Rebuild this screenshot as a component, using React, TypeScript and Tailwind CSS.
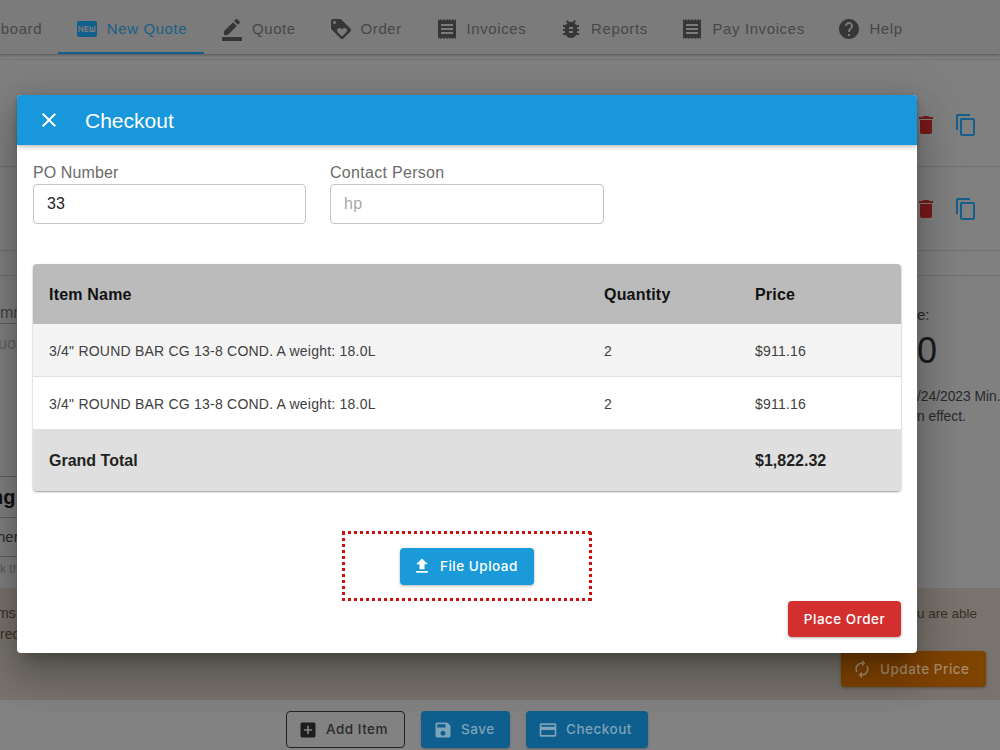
import React from "react";

const P = {
  fiberNew: "M20 4H4c-1.11 0-1.99.89-1.99 2L2 18c0 1.11.89 2 2 2h16c1.11 0 2-.89 2-2V6c0-1.11-.89-2-2-2zM8.5 15H7.3l-2.55-3.5V15H3.5V9h1.25l2.5 3.5V9H8.5v6zm5-4.74H11v1.12h2.5v1.26H11v1.11h2.5V15h-4V9h4v1.26zm7 3.74c0 .55-.45 1-1 1h-4c-.55 0-1-.45-1-1V9h1.25v4.51h1.13V9.99h1.25v3.51h1.12V9h1.25v5z",
  dash: "M3 13h8V3H3v10zm0 8h8v-6H3v6zm10 0h8V11h-8v10zm0-18v6h8V3h-8z",
  border: "M22 24H2v-4h20v4zM13.06 5.19l3.75 3.75L7.75 18H4v-3.75l9.06-9.06zm4.82 2.68-3.75-3.75 1.83-1.83c.39-.39 1.02-.39 1.41 0l2.34 2.34c.39.39.39 1.02 0 1.41l-1.83 1.83z",
  loyalty: "m21.41 11.58-9-9C12.05 2.22 11.55 2 11 2H4c-1.1 0-2 .9-2 2v7c0 .55.22 1.05.59 1.42l9 9c.36.36.86.58 1.41.58s1.05-.22 1.41-.59l7-7c.37-.36.59-.86.59-1.41s-.23-1.06-.59-1.42zM5.5 7C4.67 7 4 6.33 4 5.5S4.67 4 5.5 4 7 4.67 7 5.5 6.33 7 5.5 7zm11.77 8.27L13 19.54l-4.27-4.27C8.28 14.81 8 14.19 8 13.5c0-1.38 1.12-2.5 2.5-2.5.69 0 1.32.28 1.77.74l.73.72.73-.73c.45-.45 1.08-.73 1.77-.73 1.38 0 2.5 1.12 2.5 2.5 0 .69-.28 1.32-.73 1.77z",
  receipt: "M18 17H6v-2h12v2zm0-4H6v-2h12v2zm0-4H6V7h12v2zM3 22l1.5-1.5L6 22l1.5-1.5L9 22l1.5-1.5L12 22l1.5-1.5L15 22l1.5-1.5L18 22l1.5-1.5L21 22V2l-1.5 1.5L18 2l-1.5 1.5L15 2l-1.5 1.5L12 2l-1.5 1.5L9 2 7.5 3.5 6 2 4.5 3.5 3 2v20z",
  bug: "M20 8h-2.81c-.45-.78-1.07-1.45-1.82-1.96L17 4.41 15.59 3l-2.17 2.17C12.96 5.06 12.49 5 12 5c-.49 0-.96.06-1.41.17L8.41 3 7 4.41l1.62 1.63C7.88 6.55 7.26 7.22 6.81 8H4v2h2.09c-.05.33-.09.66-.09 1v1H4v2h2v1c0 .34.04.67.09 1H4v2h2.81c1.04 1.79 2.97 3 5.19 3s4.15-1.21 5.19-3H20v-2h-2.09c.05-.33.09-.66.09-1v-1h2v-2h-2v-1c0-.34-.04-.67-.09-1H20V8zm-6 8h-4v-2h4v2zm0-4h-4v-2h4v2z",
  help: "M12 2C6.48 2 2 6.48 2 12s4.48 10 10 10 10-4.48 10-10S17.52 2 12 2zm1 17h-2v-2h2v2zm2.07-7.75-.9.92C13.45 12.9 13 13.5 13 15h-2v-.5c0-1.1.45-2.1 1.17-2.83l1.24-1.26c.37-.36.59-.86.59-1.41 0-1.1-.9-2-2-2s-2 .9-2 2H8c0-2.21 1.79-4 4-4s4 1.79 4 4c0 .88-.36 1.68-.93 2.25z",
  del: "M6 19c0 1.1.9 2 2 2h8c1.1 0 2-.9 2-2V7H6v12zM19 4h-3.5l-1-1h-5l-1 1H5v2h14V4z",
  copy: "M16 1H4c-1.1 0-2 .9-2 2v14h2V3h12V1zm3 4H8c-1.1 0-2 .9-2 2v14c0 1.1.9 2 2 2h11c1.1 0 2-.9 2-2V7c0-1.1-.9-2-2-2zm0 16H8V7h11v14z",
  close: "M19 6.41 17.59 5 12 10.59 6.41 5 5 6.41 10.59 12 5 17.59 6.41 19 12 13.41 17.59 19 19 17.59 13.41 12z",
  upload: "M9 16h6v-6h4l-7-7-7 7h4zm-4 2h14v2H5z",
  renew: "M12 6v3l4-4-4-4v3c-4.42 0-8 3.58-8 8 0 1.57.46 3.03 1.24 4.26L6.7 14.8c-.45-.83-.7-1.79-.7-2.8 0-3.31 2.69-6 6-6zm6.76 1.74L17.3 9.2c.44.84.7 1.79.7 2.8 0 3.31-2.69 6-6 6v-3l-4 4 4 4v-3c4.42 0 8-3.58 8-8 0-1.57-.46-3.03-1.24-4.26z",
  add: "M19 3H5c-1.11 0-2 .9-2 2v14c0 1.1.89 2 2 2h14c1.1 0 2-.9 2-2V5c0-1.1-.9-2-2-2zm-2 10h-4v4h-2v-4H7v-2h4V7h2v4h4v2z",
  save: "M17 3H5c-1.11 0-2 .9-2 2v14c0 1.1.89 2 2 2h14c1.1 0 2-.9 2-2V7l-4-4zm-5 16c-1.66 0-3-1.34-3-3s1.34-3 3-3 3 1.34 3 3-1.34 3-3 3zm3-10H5V5h10v4z",
  card: "M20 4H4c-1.11 0-1.99.89-1.99 2L2 18c0 1.11.89 2 2 2h16c1.11 0 2-.89 2-2V6c0-1.11-.89-2-2-2zm0 14H4v-6h16v6zm0-10H4V6h16v2z",
};

function Icon({ d, className }: { d: string; className?: string }) {
  return (
    <svg viewBox="0 0 24 24" fill="currentColor" className={className}>
      <path d={d} />
    </svg>
  );
}

const tabs = [
  { label: "Dashboard", icon: P.dash },
  { label: "New Quote", icon: P.fiberNew, active: true },
  { label: "Quote", icon: P.border },
  { label: "Order", icon: P.loyalty },
  { label: "Invoices", icon: P.receipt },
  { label: "Reports", icon: P.bug },
  { label: "Pay Invoices", icon: P.receipt },
  { label: "Help", icon: P.help },
];

function RowActions({ className }: { className: string }) {
  return (
    <div className={className}>
      <Icon d={P.del} className="h-6 w-6 text-[#7a1a1c]" />
      <Icon d={P.copy} className="h-6 w-6 text-[#155f8a]" />
    </div>
  );
}

const rows = [
  { name: `3/4" ROUND BAR CG 13-8 COND. A weight: 18.0L`, qty: "2", price: "$911.16", bg: "bg-[#f4f4f4]" },
  { name: `3/4" ROUND BAR CG 13-8 COND. A weight: 18.0L`, qty: "2", price: "$911.16", bg: "bg-white" },
];

export default function App() {
  return (
    <div className="relative flex h-[750px] w-[1000px] flex-col overflow-hidden bg-[#808080] font-['Liberation_Sans',Arial,sans-serif]">
      <nav className="flex h-[54px] shrink-0 -ml-[85px] bg-[#7b7b7b] shadow-[0_1px_3px_rgba(0,0,0,0.35)]">
        {tabs.map((t) => (
          <div
            key={t.label}
            className={
              t.active
                ? "flex items-center gap-2 whitespace-nowrap border-b-2 border-[#115f8c] px-[16.35px] pt-[6px] text-[15px] font-medium tracking-[0.6px] text-[#1a5f87]"
                : "flex items-center gap-2 whitespace-nowrap px-[16.35px] pt-[6px] pb-[2px] text-[15px] tracking-[0.6px] text-[#474747]"
            }
          >
            <Icon d={t.icon} className={t.active ? "h-6 w-6 text-[#115f8c]" : "h-6 w-6 text-[#363636]"} />
            {t.label}
          </div>
        ))}
      </nav>

      <div className="mt-[5px] border-t border-[#737373]" />

      <RowActions className="flex h-[107px] shrink-0 justify-end gap-4 border-b border-[#717171] pt-[53px] pr-[22px]" />
      <RowActions className="flex h-[84px] shrink-0 justify-end gap-4 border-b border-[#717171] pt-[30px] pr-[22px]" />
      <div className="h-[25px] shrink-0 border-b border-[#717171]" />

      <div className="flex h-[312px] shrink-0 justify-between">
        <div className="w-[17px] whitespace-nowrap">
          <div className="h-[48px] border-b border-[#5f5f5f] pt-[29px] text-[16px] leading-[16px] text-[#444444]">mm</div>
          <div className="h-[153px] border-b border-[#5f5f5f] pt-[12px] text-[16px] leading-[16px] text-[#606060]"><span className="-ml-[2px] block">uo</span></div>
          <div className="h-[41px] border-b border-[#5f5f5f] pt-[6px] text-[20px] leading-[28px] font-bold text-[#111111]"><span className="-ml-[9px] block">ng</span></div>
          <div className="h-[39px] border-b border-[#5f5f5f] pt-[10px] text-[15px] leading-[18px] text-[#2a2a2a]"><span className="-ml-[3px] block">her</span></div>
          <div className="pt-[6px] text-[12px] leading-[13px] text-[#5a5a5a]">k th</div>
        </div>
        <div className="w-[83px] whitespace-nowrap text-[#2a2a2a]">
          <div className="pt-[31px] text-[15px] leading-[16px]">e:</div>
          <div className="pt-[6px] text-[36px] leading-[44px] text-[#1c1c1c]">0</div>
          <div className="pt-[14px] text-[13.8px] leading-[20px]">/24/2023 Min.</div>
          <div className="text-[13.8px] leading-[20px]">n effect.</div>
        </div>
      </div>

      <div className="flex h-[112px] shrink-0 justify-between bg-[#78736c] text-[14px] leading-[21px] text-[#3a3025]">
        <div className="w-[17px] pt-[15px]">
          <div className="-ml-[3px]">ms</div>
          <div>rec</div>
        </div>
        <div className="flex w-[83px] flex-col items-end pt-[15px]">
          <div className="w-[83px] text-[13.5px] whitespace-nowrap">u are able</div>
          <div className="mt-[27px] mr-[14px] flex h-[36px] w-[145px] shrink-0 items-center gap-2 rounded bg-[#7f4300] pl-[11px] font-['Inter',sans-serif] text-[13.5px] font-medium tracking-[0.5px] whitespace-nowrap text-[#a98c6c] shadow-[0_1px_3px_rgba(0,0,0,0.3)]">
            <Icon d={P.renew} className="h-5 w-5 shrink-0" />
            Update Price
          </div>
        </div>
      </div>

      <div className="flex h-[50px] shrink-0 items-start justify-center gap-4 bg-[#828282] pt-[11px] pr-[66px] font-['Inter',sans-serif] text-[13.5px] font-medium tracking-[0.5px]">
        <div className="flex h-[37px] w-[119px] items-center gap-2 rounded border border-[#222222] pl-[11px] text-[#2a2a2a]">
          <Icon d={P.add} className="h-5 w-5 text-[#1c1c1c]" />
          Add Item
        </div>
        <div className="flex h-[37px] w-[89px] items-center gap-2 rounded bg-[#0e5f8e] pl-[12px] text-[#7fa3b8] shadow-[0_1px_2px_rgba(0,0,0,0.25)]">
          <Icon d={P.save} className="h-5 w-5" />
          Save
        </div>
        <div className="flex h-[37px] w-[122px] items-center gap-2 rounded bg-[#0e5f8e] pl-[12px] text-[#7fa3b8] shadow-[0_1px_2px_rgba(0,0,0,0.25)]">
          <Icon d={P.card} className="h-5 w-5" />
          Checkout
        </div>
      </div>

      <div className="absolute top-[95px] left-[17px] flex h-[558px] w-[900px] flex-col rounded bg-white shadow-[0_11px_15px_-7px_rgba(0,0,0,0.25),0_24px_38px_3px_rgba(0,0,0,0.16),0_9px_46px_8px_rgba(0,0,0,0.14)]">
        <header className="flex h-[50px] shrink-0 items-center gap-[24px] rounded-t bg-[#1997dc] pl-5 text-[21px] font-medium text-white shadow-[0_2px_4px_rgba(0,0,0,0.25)]">
          <Icon d={P.close} className="h-6 w-6" />
          <span className="pt-[2px]">Checkout</span>
        </header>

        <div className="flex flex-1 flex-col px-4">
          <div className="flex gap-6 pt-[18px]">
            <label className="block w-[273px] text-[16px] leading-[20px] tracking-[0.1px] text-[#6b6b6b]">
              PO Number
              <input
                readOnly
                value="33"
                className="mt-px block h-[40px] w-full rounded border border-[#c4c4c4] px-[13px] text-[16px] text-[#222222] outline-none"
              />
            </label>
            <label className="block w-[274px] text-[16px] leading-[20px] tracking-[0.3px] text-[#6b6b6b]">
              Contact Person
              <input
                readOnly
                placeholder="hp"
                className="mt-px block h-[40px] w-full rounded border border-[#c4c4c4] px-[13px] text-[16px] text-[#222222] outline-none placeholder:text-[#a8a8a8]"
              />
            </label>
          </div>

          <div className="mt-[40px] overflow-hidden rounded shadow-[0_1px_2px_rgba(0,0,0,0.4)]">
            <div className="grid h-[60px] grid-cols-[555px_151px_1fr] items-center bg-[#bbbbbb] pt-px pl-4 text-[16px] font-bold tracking-[0.2px] text-[#111111]">
              <div>Item Name</div>
              <div>Quantity</div>
              <div>Price</div>
            </div>
            {rows.map((r, i) => (
              <div
                key={i}
                className={`grid h-[53px] grid-cols-[555px_151px_1fr] items-center border-b border-[#e0e0e0] pt-[3px] pl-4 text-[14px] tracking-[0.22px] text-[#404040] ${r.bg}`}
              >
                <div>{r.name}</div>
                <div>{r.qty}</div>
                <div>{r.price}</div>
              </div>
            ))}
            <div className="grid h-[61px] grid-cols-[706px_1fr] items-center bg-[#dfdfdf] pl-4 text-[16px] font-bold text-[#222222]">
              <div>Grand Total</div>
              <div>$1,822.32</div>
            </div>
          </div>

          <div className="mt-[40px] flex h-[70px] w-[250px] items-center justify-center self-center [background:repeating-linear-gradient(90deg,#cc1010_0_3px,transparent_3px_6px)_top/100%_3px_no-repeat,repeating-linear-gradient(90deg,#cc1010_0_3px,transparent_3px_6px)_bottom/100%_3px_no-repeat,repeating-linear-gradient(0deg,#cc1010_0_3px,transparent_3px_6px)_left/3px_100%_no-repeat,repeating-linear-gradient(0deg,#cc1010_0_3px,transparent_3px_6px)_right/3px_100%_no-repeat]">
            <div className="flex h-[37px] w-[134px] items-center gap-2 rounded bg-[#1a9ad9] pl-[12px] font-['Inter',sans-serif] text-[13.5px] font-medium tracking-[0.5px] text-white shadow-[0_1px_3px_rgba(0,0,0,0.3)]">
              <Icon d={P.upload} className="h-5 w-5" />
              File Upload
            </div>
          </div>

          <div className="flex justify-end">
            <div className="flex h-[36px] w-[113px] items-center justify-center rounded bg-[#d32f2f] font-['Inter',sans-serif] text-[13.5px] font-medium tracking-[0.5px] text-white shadow-[0_1px_3px_rgba(0,0,0,0.3)]">
              Place Order
            </div>
          </div>
        </div>
      </div>
    </div>
  );
}
